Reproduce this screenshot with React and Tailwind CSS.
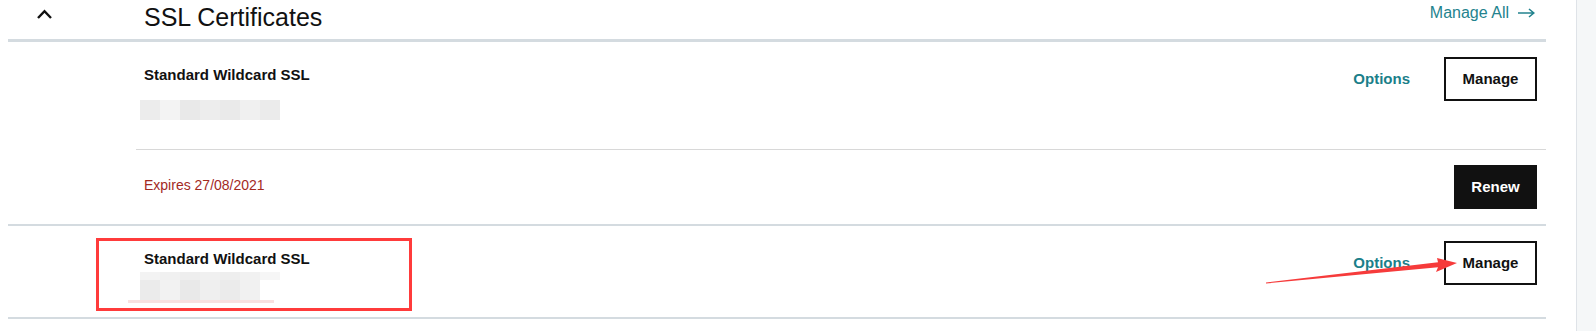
import React from 'react';

// Bloque pixelado que tapa el nombre del dominio
function Pixelado({ celdas, className = '' }) {
  return (
    <div className={`flex h-[20px] ${className}`}>
      {celdas.map((c, i) => (
        <div key={i} className={`h-full w-[20px] ${c}`} />
      ))}
    </div>
  );
}

function BotonManage() {
  return (
    <button className="h-[44px] w-[93px] border-2 border-[#111] bg-white text-[15px] font-bold text-[#111]">
      Manage
    </button>
  );
}

export default function App() {
  return (
    <div className="relative flex h-[331px] w-full overflow-hidden bg-white font-['Liberation_Sans',Arial,sans-serif] text-[#111]">
      <div className="w-[1576px] pl-2 pr-[30px]">
        {/* Encabezado */}
        <div className="flex h-[39px] items-start">
          <svg className="ml-[28px] mt-[8px]" width="17" height="12" viewBox="0 0 17 12">
            <path d="M2 10 L8.5 3.2 L15 10" fill="none" stroke="#111" strokeWidth="2.4" />
          </svg>
          <h2 className="ml-[91px] mt-[2px] text-[25px] leading-[30px] text-[#111]">SSL Certificates</h2>
          <a className="ml-auto mr-[11px] mt-[3px] flex items-center gap-[9px] text-[16px] leading-[20px] text-[#23838e]">
            Manage All
            <svg width="17" height="10" viewBox="0 0 17 10">
              <path d="M0 5 H15.5 M11 1 L15.8 5 L11 9" fill="none" stroke="#23838e" strokeWidth="1.6" />
            </svg>
          </a>
        </div>
        <div className="h-[3px] bg-[#d4dbe0]" />

        {/* Certificado 1 */}
        <div className="flex h-[107px]">
          <div className="ml-[132px] pt-[23px]">
            <p className="ml-1 text-[15px] font-bold leading-[20px]">Standard Wildcard SSL</p>
            <Pixelado
              className="mt-[15px]"
              celdas={['bg-[#ececec]', 'bg-[#f3f3f3]', 'bg-[#e9e9e9]', 'bg-[#ededed]', 'bg-[#eaeaea]', 'bg-[#f0f0f0]', 'bg-[#ebebeb]']}
            />
          </div>
          <div className="ml-auto mr-[9px] mt-[15px] flex h-[44px] items-center">
            <a className="text-[15px] font-bold text-[#1b7f8a]">Options</a>
            <div className="ml-[34px]">
              <BotonManage />
            </div>
          </div>
        </div>
        <div className="ml-[128px] h-px bg-[#d8d8d8]" />
        <div className="ml-[128px] flex h-[74px] items-start">
          <p className="ml-2 mt-[25px] text-[14px] leading-[20px] text-[#a3291f]">Expires 27/08/2021</p>
          <button className="ml-auto mr-[9px] mt-[15px] h-[44px] w-[83px] bg-[#111] text-[15px] font-bold text-white">
            Renew
          </button>
        </div>
        <div className="h-[2px] bg-[#d4dbe0]" />

        {/* Certificado 2 */}
        <div className="flex h-[91px]">
          <div className="ml-[132px] pt-[23px]">
            <p className="ml-1 text-[15px] font-bold leading-[20px]">Standard Wildcard SSL</p>
            <div className="mt-[3px]">
              <div className="flex h-[8px]">
                {['bg-[#f3f3f3]', 'bg-[#f0f0f0]', 'bg-[#eeeeee]', 'bg-[#f0f0f0]', 'bg-[#eeeeee]', 'bg-[#f1f1f1]', 'bg-[#f6f6f6]'].map((c, i) => (
                  <div key={i} className={`h-full w-[20px] ${c}`} />
                ))}
              </div>
              <div className="flex h-[20px]">
                {['bg-[#ebebeb]', 'bg-[#f2f2f2]', 'bg-[#e9e9e9]', 'bg-[#efefef]', 'bg-[#ebebeb]', 'bg-[#f1f1f1]', 'bg-white'].map((c, i) => (
                  <div key={i} className={`h-full w-[20px] ${c}`} />
                ))}
              </div>
              <div className="-ml-[12px] h-[3px] w-[146px] bg-[#f8e1e1]" />
            </div>
          </div>
          <div className="ml-auto mr-[9px] mt-[15px] flex h-[44px] items-center">
            <a className="text-[15px] font-bold text-[#1b7f8a]">Options</a>
            <div className="ml-[34px]">
              <BotonManage />
            </div>
          </div>
        </div>
        <div className="h-[2px] bg-[#d4dbe0]" />
      </div>

      {/* Barra lateral */}
      <div className="flex-1 border-l border-[#dfe3e8] bg-[#f5f7f8]" />

      {/* Anotaciones sobre la captura */}
      <div className="absolute left-[96px] top-[238px] h-[73px] w-[316px] border-[3px] border-[#ff3b3b]" />
      <svg className="absolute left-[1260px] top-[250px]" width="200" height="40" viewBox="0 0 200 40">
        <polygon points="6,32.5 178,12.3 177,8 197,13 176,22 178,17.3 6,33.5" fill="#f63b3b" />
      </svg>
    </div>
  );
}
